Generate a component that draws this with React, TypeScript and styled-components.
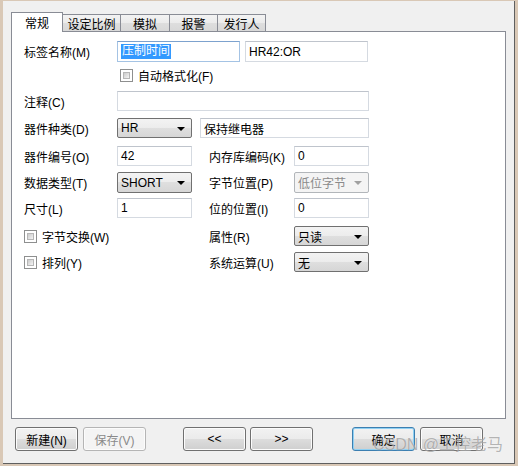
import React from "react";
import styled, { createGlobalStyle, css } from "styled-components";

const Global = createGlobalStyle`
  html, body { margin: 0; padding: 0; background: #f0f0f0; }
  * { box-sizing: border-box; }
  body { font-family: "Liberation Sans", "Noto Sans CJK SC", sans-serif; font-size: 12px; color: #000; }
`;

const Frame = styled.div`
  position: relative;
  width: 518px;
  height: 466px;
  background: #d9c8b6;
  padding: 1px 3px 2px 3px;
`;

const Dialog = styled.div`
  width: 512px;
  height: 463px;
  background: #f0f0f0;
  border-right: 1px solid #5f5f5f;
  border-bottom: 1px solid #5f5f5f;
  padding: 11px 0 0 8px;
  display: flex;
  flex-direction: column;
`;

const TabBar = styled.div`
  display: flex;
  align-items: flex-end;
  height: 19px;
`;

const Tab = styled.div<{ $active?: boolean; $w: number }>`
  width: ${(p) => p.$w}px;
  height: ${(p) => (p.$active ? 20 : 17)}px;
  margin-bottom: ${(p) => (p.$active ? -1 : 0)}px;
  border: 1px solid #898c95;
  border-bottom: none;
  border-left-width: ${(p) => (p.$active ? 1 : 0)}px;
  position: relative;
  z-index: ${(p) => (p.$active ? 2 : 1)};
  display: flex;
  align-items: center;
  justify-content: center;
  font-size: 12px;
  ${(p) =>
    p.$active
      ? css`
          background: #fff;
        `
      : css`
          background: linear-gradient(#f3f3f3, #ebebeb 50%, #dedede 50%, #d8d8d8);
          padding-top: 1px;
        `}
`;

const Panel = styled.div`
  width: 495px;
  height: 388px;
  background: #fff;
  border: 1px solid #898c95;
  padding: 9px 0 0 12px;
  display: flex;
  flex-direction: column;
`;

const Row = styled.div<{ $mt?: number; $h?: number }>`
  display: flex;
  align-items: center;
  margin-top: ${(p) => p.$mt ?? 0}px;
  height: ${(p) => p.$h ?? 20}px;
`;

const Label = styled.div<{ $w?: number }>`
  width: ${(p) => p.$w ?? 93}px;
  flex-shrink: 0;
  font-size: 12px;
  white-space: nowrap;
`;

const Input = styled.div<{ $w: number; $focus?: boolean; $ml?: number }>`
  width: ${(p) => p.$w}px;
  height: 100%;
  margin-left: ${(p) => p.$ml ?? 0}px;
  border: 1px solid ${(p) => (p.$focus ? "#a4c3e4" : "#d5dae1")};
  border-top-color: ${(p) => (p.$focus ? "#7da2ce" : "#bfc4cc")};
  background: #fff;
  display: flex;
  align-items: center;
  padding-left: 3px;
  font-size: 12px;
  white-space: nowrap;
`;

const Selected = styled.span`
  background: #3399ff;
  color: #fff;
  padding: 1px 1px;
  line-height: 13px;
`;

const Select = styled.div<{ $w: number; $disabled?: boolean }>`
  width: ${(p) => p.$w}px;
  height: 100%;
  border: 1px solid ${(p) => (p.$disabled ? "#b2b6ba" : "#707070")};
  border-radius: 2px;
  background: ${(p) =>
    p.$disabled
      ? "#f4f4f4"
      : "linear-gradient(#f3f3f3, #ececec 50%, #dfdfdf 50%, #d6d6d6)"};
  color: ${(p) => (p.$disabled ? "#8a8a8a" : "#000")};
  display: flex;
  align-items: center;
  justify-content: space-between;
  padding: 0 6px 0 3px;
  font-size: 12px;
`;

const Arrow = styled.span<{ $disabled?: boolean }>`
  width: 0;
  height: 0;
  border-left: 4px solid transparent;
  border-right: 4px solid transparent;
  border-top: 4px solid ${(p) => (p.$disabled ? "#a0a0a0" : "#000")};
  margin-top: 1px;
`;

const Check = styled.label<{ $ml?: number; $w?: number }>`
  display: flex;
  align-items: center;
  gap: 5px;
  width: ${(p) => (p.$w ? `${p.$w}px` : "auto")};
  flex-shrink: 0;
  margin-left: ${(p) => p.$ml ?? 0}px;
  font-size: 12px;
  white-space: nowrap;
`;

const Box = styled.span`
  width: 13px;
  height: 13px;
  border: 1px solid #8e8f8f;
  background: #fff;
  padding: 2px;
  display: inline-flex;
  &::after {
    content: "";
    flex: 1;
    background: linear-gradient(135deg, #cbcbcb, #f4f4f4);
    border: 1px solid #b6b6b6;
  }
`;

const Columns = styled.div`
  display: flex;
  height: 100%;
  align-items: center;
`;

const Spacer = styled.div<{ $w: number }>`
  width: ${(p) => p.$w}px;
  flex-shrink: 0;
`;

const ButtonRow = styled.div`
  display: flex;
  margin: 8px 0 0 4px;
`;

const Button = styled.div<{ $ml?: number; $disabled?: boolean; $default?: boolean }>`
  width: 63px;
  height: 24px;
  margin-left: ${(p) => p.$ml ?? 0}px;
  border: 1px solid ${(p) => (p.$disabled ? "#b5b5b5" : p.$default ? "#3c7fb1" : "#707070")};
  border-radius: 3px;
  background: ${(p) =>
    p.$disabled
      ? "#f4f4f4"
      : "linear-gradient(#f2f2f2, #ebebeb 50%, #dddddd 50%, #cfcfcf)"};
  box-shadow: ${(p) => (p.$default ? "inset 0 0 0 1px #8fd0f3" : "inset 0 0 0 1px #fcfcfc")};
  color: ${(p) => (p.$disabled ? "#8a8a8a" : "#000")};
  display: flex;
  align-items: center;
  justify-content: center;
  font-size: 12px;
`;

const Watermark = styled.div`
  position: absolute;
  left: 373px;
  top: 436px;
  font-family: "Liberation Sans", "Noto Sans CJK SC", sans-serif;
  font-size: 16px;
  line-height: 18px;
  color: rgba(120, 120, 120, 0.55);
  text-shadow: 0 0 1px rgba(255, 255, 255, 0.7);
  white-space: nowrap;
  pointer-events: none;
  z-index: 5;
`;

export default function App() {
  return (
    <>
      <Global />
      <Frame>
        <Dialog>
          <TabBar>
            <Tab $active $w={52}>常规</Tab>
            <Tab $w={58}>设定比例</Tab>
            <Tab $w={49}>模拟</Tab>
            <Tab $w={48}>报警</Tab>
            <Tab $w={48}>发行人</Tab>
          </TabBar>
          <Panel>
            <Row $h={21}>
              <Label>标签名称(M)</Label>
              <Input $w={123} $focus>
                <Selected>压制时间</Selected>
              </Input>
              <Input $w={123} $ml={5}>HR42:OR</Input>
            </Row>
            <Row $mt={3}>
              <Check $ml={96}>
                <Box />
                自动格式化(F)
              </Check>
            </Row>
            <Row $mt={6}>
              <Label>注释(C)</Label>
              <Input $w={252} />
            </Row>
            <Row $mt={7}>
              <Label>器件种类(D)</Label>
              <Select $w={75}>
                HR
                <Arrow />
              </Select>
              <Input $w={169} $ml={8}>保持继电器</Input>
            </Row>
            <Row $mt={8}>
              <Columns>
                <Label>器件编号(O)</Label>
                <Input $w={75}>42</Input>
                <Spacer $w={17} />
                <Label $w={85}>内存库编码(K)</Label>
                <Input $w={75}>0</Input>
              </Columns>
            </Row>
            <Row $mt={6} $h={21}>
              <Columns>
                <Label>数据类型(T)</Label>
                <Select $w={75}>
                  SHORT
                  <Arrow />
                </Select>
                <Spacer $w={17} />
                <Label $w={85}>字节位置(P)</Label>
                <Select $w={75} $disabled>
                  低位字节
                  <Arrow $disabled />
                </Select>
              </Columns>
            </Row>
            <Row $mt={5}>
              <Columns>
                <Label>尺寸(L)</Label>
                <Input $w={75}>1</Input>
                <Spacer $w={17} />
                <Label $w={85}>位的位置(I)</Label>
                <Input $w={75}>0</Input>
              </Columns>
            </Row>
            <Row $mt={8}>
              <Columns>
                <Check $w={185}>
                  <Box />
                  字节交换(W)
                </Check>
                <Label $w={85}>属性(R)</Label>
                <Select $w={75}>
                  只读
                  <Arrow />
                </Select>
              </Columns>
            </Row>
            <Row $mt={6}>
              <Columns>
                <Check $w={185}>
                  <Box />
                  排列(Y)
                </Check>
                <Label $w={85}>系统运算(U)</Label>
                <Select $w={75}>
                  无
                  <Arrow />
                </Select>
              </Columns>
            </Row>
          </Panel>
          <ButtonRow>
            <Button>新建(N)</Button>
            <Button $ml={5} $disabled>保存(V)</Button>
            <Button $ml={37}>&lt;&lt;</Button>
            <Button $ml={4}>&gt;&gt;</Button>
            <Button $ml={39} $default>确定</Button>
            <Button $ml={5}>取消</Button>
          </ButtonRow>
        </Dialog>
        <Watermark>CSDN @工控老马</Watermark>
      </Frame>
    </>
  );
}
